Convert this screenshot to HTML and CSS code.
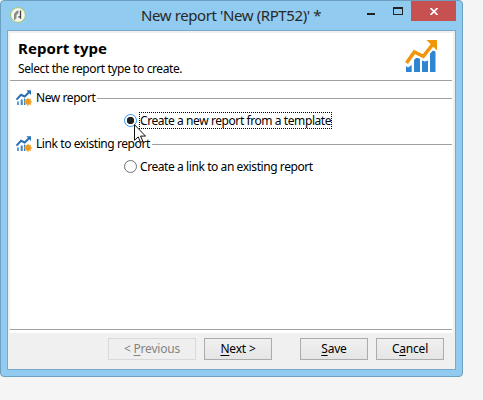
FILE: index.html
```html
<!DOCTYPE html>
<html lang="en">
<head>
<meta charset="utf-8">
<title>New report</title>
<link rel="stylesheet" href="styles.css">
</head>
<body>
<svg class="defs" width="0" height="0">
  <symbol id="chart-star" viewBox="0 0 16 16">
    <path d="M1.2 11.5h1.6V15H1.2zM4.7 9.5h2V15h-2zM8 8.5h1V15H8z" fill="#3985c8"/>
    <path d="M.5 9.6 5 4.8l3.7 1.7L13 2.2" fill="none" stroke="#2870b4" stroke-width="2"/>
    <path d="M10.3.3H15V5z" fill="#2870b4"/>
    <circle cx="12" cy="11.8" r="2.8" fill="#f09a1c"/>
    <path d="M12 7.9v7.8M8.1 11.8h7.8M9.3 9.1l5.4 5.4M14.7 9.1l-5.4 5.4" stroke="#f09a1c" stroke-width="1.2"/>
  </symbol>
</svg>
<div class="window">
  <header class="titlebar">
    <svg class="app-icon" viewBox="0 0 16 16">
      <circle cx="8" cy="8" r="7.4" fill="#f5f5f2" stroke="#a5c75c"/>
      <path d="M4 13V7l2.5-3 2-.5V6L6.5 8v4L6 11l-.8 2z" fill="#8a8a88"/>
      <path d="M10.5 3.5V11M8.3 9.8h2.2v2" fill="none" stroke="#444" stroke-width="1.3"/>
    </svg>
    <h1 class="title">New report 'New (RPT52)' *</h1>
    <div class="controls">
      <span class="minimize"></span>
      <span class="maximize"></span>
      <span class="close"><svg width="8" height="7" viewBox="0 0 8 7"><path d="m.5 0 7 7m0-7-7 7" stroke="#fff" stroke-width="1.7"/></svg></span>
    </div>
  </header>
  <main class="body">
    <section class="intro">
      <div>
        <h2 class="heading">Report type</h2>
        <p class="subtitle">Select the report type to create.</p>
      </div>
      <svg class="chart" viewBox="0 0 34 34">
        <path d="M1 27l2 1.5L6.7 26v7H1zM9 21l2-2h2l2 1v13H9zM17 21.5l3 1 3-1V33h-6zM25 14.5l3-3 2.5 1V33H25z" fill="#2f85d0"/>
        <path d="M1.5 24 9.3 13l9 4.3L28 5" fill="none" stroke="#f09609" stroke-width="3.6"/>
        <path d="M21.5 1H32v10.5z" fill="#f09609"/>
      </svg>
    </section>
    <section class="group">
      <div class="legend"><svg class="icon"><use href="#chart-star"/></svg><span>New report</span><i></i></div>
      <label class="option"><span class="radio on"></span><span class="text focus">Create a new report from a template</span></label>
    </section>
    <section class="group">
      <div class="legend"><svg class="icon"><use href="#chart-star"/></svg><span>Link to existing report</span><i></i></div>
      <label class="option"><span class="radio"></span><span class="text">Create a link to an existing report</span></label>
    </section>
    <footer class="footer">
      <button class="btn previous" disabled>&lt; <u>P</u>revious</button>
      <button class="btn next"><u>N</u>ext &gt;</button>
      <button class="btn save"><u>S</u>ave</button>
      <button class="btn cancel">C<u>a</u>ncel</button>
    </footer>
  </main>
</div>
<svg class="cursor" viewBox="0 0 12 19"><path d="M.5.7v15.6l3.7-3.4 2.4 5.4 2.3-1-2.4-5.2h5z" fill="#fff" stroke="#111"/></svg>
</body>
</html>
```
FILE: styles.css
```css
* { box-sizing: border-box; }
body { margin: 0; height: 400px; background: #f5f5f5; overflow: hidden; font: 12px/16px "Noto Sans", "Open Sans", sans-serif; color: #000; }
h1, h2, p { margin: 0; }
.defs { position: absolute; }
.window { width: 463px; height: 377px; padding: 0 6px; border: 1px solid #6d9fc1; border-radius: 4px; background: #91cbef; }
.titlebar { height: 29px; display: flex; }
.app-icon { width: 16px; height: 16px; margin: 6px 0 0 3px; flex: none; }
.title { margin: 4px 0 0 115px; width: 190px; white-space: nowrap; font-size: 15px; line-height: 20px; font-weight: 400; color: #282828; letter-spacing: -.4px; }
.controls { display: flex; margin-left: 36px; flex: none; }
.minimize { width: 8px; height: 2px; background: #222; margin-top: 12px; }
.maximize { width: 10px; height: 8px; border: 1px solid #222; border-top-width: 2px; margin: 6px 8px 0 18px; }
.close { width: 45px; height: 20px; background: #c75050; display: flex; align-items: center; justify-content: center; }
.body { height: 340px; border: 1px solid #76a9cb; background: linear-gradient(#fff, #fff) 2px 2px / 443px 300px no-repeat #f0f0f0; padding: 0 3px 0 2px; display: flex; flex-direction: column; }
.intro { height: 50px; border-bottom: 1px solid #a0a0a0; display: flex; justify-content: space-between; padding: 8px 13px 0 8px; }
.heading { margin-top: -1px; font-size: 15px; line-height: 20px; font-weight: 700; letter-spacing: .08px; white-space: nowrap; }
.subtitle { margin-top: 3px; letter-spacing: -.4px; white-space: nowrap; }
.chart { width: 34px; height: 34px; }
.group { height: 46px; }
.intro + .group { margin-top: 8px; }
.legend { height: 18px; display: flex; align-items: center; padding-left: 6px; }
.icon { width: 16px; height: 16px; margin-right: 4px; flex: none; }
.legend span { white-space: nowrap; letter-spacing: -.42px; }
.legend i { flex: 1; height: 1px; background: #a0a0a0; margin-left: 2px; }
.option { display: flex; align-items: center; height: 17px; margin: 5px 0 0 114px; }
.radio { width: 13px; height: 13px; border: 1px solid #707070; border-radius: 50%; background: #fff; margin-right: 2px; }
.radio.on { border-color: #3399ff; background: radial-gradient(circle, #222 0 3.4px, #fff 4px); }
.text { height: 17px; padding-left: 1px; line-height: 18px; white-space: nowrap; letter-spacing: -.42px; }
.focus { outline: 1px dotted #000; padding-right: 1px; outline-offset: -1px; }
.footer { margin-top: auto; height: 40px; border-top: 1px solid #a0a0a0; box-shadow: inset 0 1px #fff; padding: 8px 8px 0 0; display: flex; justify-content: flex-end; }
.btn { height: 22px; padding: 0; border: 1px solid #acacac; background: linear-gradient(#f0f0f0, #e5e5e5); font: inherit; line-height: 18px; letter-spacing: -.2px; width: 68px; margin-left: 8px; color: #000; }
.btn:disabled { width: 88px; border-color: #d9d9d9; background: #efefef; color: #838383; }
.btn.save { margin-left: 28px; }
u { text-underline-offset: 2px; text-decoration-skip-ink: none; }
.cursor { position: absolute; left: 134px; top: 124px; width: 12px; height: 19px; }
```
